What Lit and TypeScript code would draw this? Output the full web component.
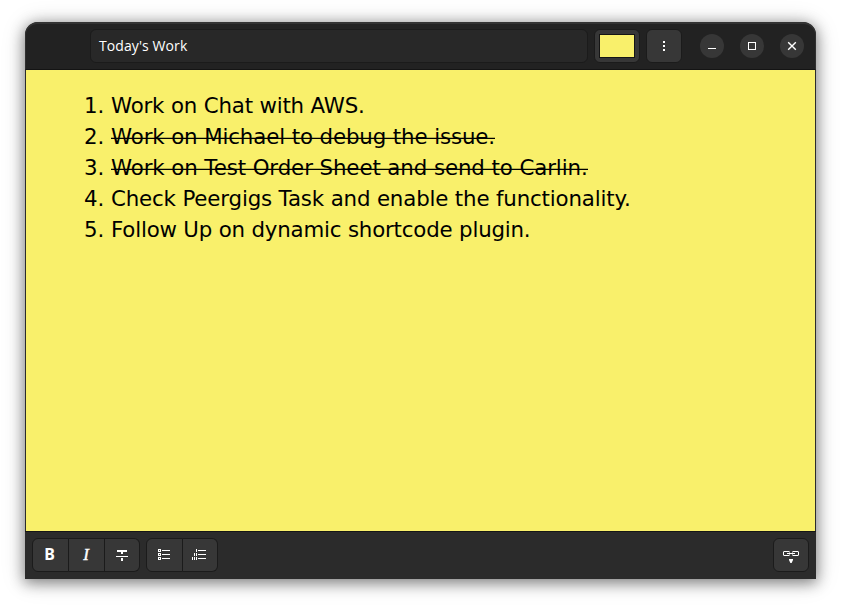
import { LitElement, html, css, svg } from "lit";
import { customElement } from "lit/decorators.js";
import { styleMap } from "lit/directives/style-map.js";

interface Note { text: string; tracking: number; done?: boolean; }

const NOTES: Note[] = [
  { text: "Work on Chat with AWS.", tracking: -0.18 },
  { text: "Work on Michael to debug the issue.", tracking: -0.12, done: true },
  { text: "Work on Test Order Sheet and send to Carlin.", tracking: -0.095, done: true },
  { text: "Check Peergigs Task and enable the functionality.", tracking: -0.16 },
  { text: "Follow Up on dynamic shortcode plugin.", tracking: -0.19 },
];

const icon = (body: unknown) => html`<svg width="16" height="16" viewBox="0 0 16 16" fill="#fff" shape-rendering="crispEdges">${body}</svg>`;

const strike = icon(svg`<path d="M3 3h10v2H3zM7 5h2v2H7zM2 9h12v1H2zM7 11h2v3H7z"/>`);
const bullets = icon(svg`<path fill-rule="evenodd" d="M2 2h3v3H2zM3 3v1h1V3zM2 6h3v3H2zM3 7v1h1V7zM2 10h3v3H2zM3 11v1h1v-1zM6 3h8v1H6zM6 7h8v1H6zM6 11h8v1H6z"/>`);
const numbers = icon(svg`<path d="M4 2h1v3H4zM2 6h1v3H2zM4 6h1v3H4zM0 10h1v3H0zM2 10h1v3H2zM4 10h1v3H4zM6 3h8v1H6zM6 7h8v1H6zM6 11h8v1H6z"/>`);
const link = html`<svg width="16" height="16" viewBox="0 0 16 16" fill="none" stroke="#fff"><path d="M6.5 5.5v-.5q0-.5-.5-.5H1q-.5 0-.5.5v3q0 .5.5.5h5q.5 0 .5-.5V7.500M9.500 5.500v-.5q0-.5.5-.5h5q.5 0 .5.5v3q0 .5-.5.5h-5q-.5 0-.5-.5V7.500M4 6.500h8"/><path d="M6 12h4v1L8.600 16H7.400L6 13z" fill="#fff" stroke="none"/></svg>`;
const dots = icon(svg`<path d="M7 3h2v2H7zM7 7h2v2H7zM7 11h2v2H7z"/>`);
const minimize = icon(svg`<path d="M4 10h8v1H4z"/>`);
const maximize = icon(svg`<path fill-rule="evenodd" d="M4 4h8v8H4zM5 5v6h6V5z"/>`);
const close = html`<svg width="16" height="16" viewBox="0 0 16 16" stroke="#fff" stroke-width="1.4"><path d="M4.2 4.2l7.6 7.6M11.8 4.2l-7.6 7.6"/></svg>`;

@customElement("app-root")
export class AppRoot extends LitElement {
  static styles = css`
    :host { display: block; box-sizing: border-box; height: 607px; padding: 22px 25px 28px; background: #fff; overflow: hidden; }
    * { box-sizing: border-box; }
    .window { display: flex; flex-direction: column; width: 791px; height: 557px; border-radius: 13px 13px 0 0; background: #2b2b2b; box-shadow: 0 3px 14px 1px rgba(0,0,0,.42), 0 2px 24px rgba(0,0,0,.18); }
    .header { display: flex; align-items: center; height: 48px; flex: none; padding: 0 11px 1px 64px; background: #222; border: 1px solid #303030; border-top: 2px solid #333; border-bottom: 1px solid #141414; border-radius: 13px 13px 0 0; }
    .title { width: 498px; height: 34px; border: 1px solid #1b1b1b; border-radius: 6px; background: #282828; color: #fff; font: 14px/31px "Open Sans", sans-serif; letter-spacing: .09px; padding-left: 8px; white-space: nowrap; }
    .button { display: flex; align-items: center; justify-content: center; height: 34px; width: 36px; background: #373737; border: 1px solid #1b1b1b; border-radius: 6px; color: #fff; }
    .color { width: 46px; margin-left: 6px; }
    .swatch { width: 36px; height: 24px; background: #f9f06b; border: 1px solid #151515; }
    .menu { margin-left: 6px; }
    .controls { display: flex; gap: 16px; margin-left: 18px; }
    .control { display: flex; align-items: center; justify-content: center; width: 24px; height: 24px; border-radius: 50%; background: #373737; }
    .note { flex: 1; margin: 0 1px; background: #f9f06b; padding: 20px 0 0 58px; color: #000; font: 21.333px/31px "DejaVu Sans", sans-serif; }
    .row { display: flex; height: 31px; white-space: nowrap; }
    .number { width: 27px; }
    .done { position: relative; }
    .done::after { content: ""; position: absolute; left: 0; right: 0; top: 17px; height: 1px; background: #000; box-shadow: 0 -1px rgba(0,0,0,.25); }
    .footer { display: flex; flex: none; height: 48px; padding: 6px 7px 0; background: #2b2b2b; border-top: 1px solid #161616; }
    .group { display: flex; margin-right: 6px; }
    .group .button + .button { border-left: 0; border-radius: 0; }
    .group .button:first-child { border-radius: 6px 0 0 6px; width: 37px; padding-right: 1px; }
    .group .button:last-child { border-radius: 0 6px 6px 0; width: 35px; }
    .spacer { flex: 1; }
    .bold { font: bold 16px/16px "Noto Sans", sans-serif; margin: 0 1px 2px 0; }
    .italic { font: italic 17px/16px "Liberation Serif", serif; margin-right: 1px; -webkit-text-stroke: .4px #fff; }
    svg { display: block; }
  `;

  render() {
    return html`
      <div class="window">
        <div class="header">
          <div class="title">Today's Work</div>
          <div class="button color"><div class="swatch"></div></div>
          <div class="button menu">${dots}</div>
          <div class="controls">
            ${[minimize, maximize, close].map((i) => html`<div class="control">${i}</div>`)}
          </div>
        </div>
        <div class="note">
          ${NOTES.map((n, i) => html`<div class="row"><span class="number">${i + 1}.</span><span class=${n.done ? "done" : ""} style=${styleMap({ letterSpacing: `${n.tracking}px` })}>${n.text}</span></div>`)}
        </div>
        <div class="footer">
          <div class="group">
            <div class="button"><span class="bold">B</span></div>
            <div class="button"><span class="italic">I</span></div>
            <div class="button">${strike}</div>
          </div>
          <div class="group">
            <div class="button">${bullets}</div>
            <div class="button">${numbers}</div>
          </div>
          <div class="spacer"></div>
          <div class="button">${link}</div>
        </div>
      </div>`;
  }
}
